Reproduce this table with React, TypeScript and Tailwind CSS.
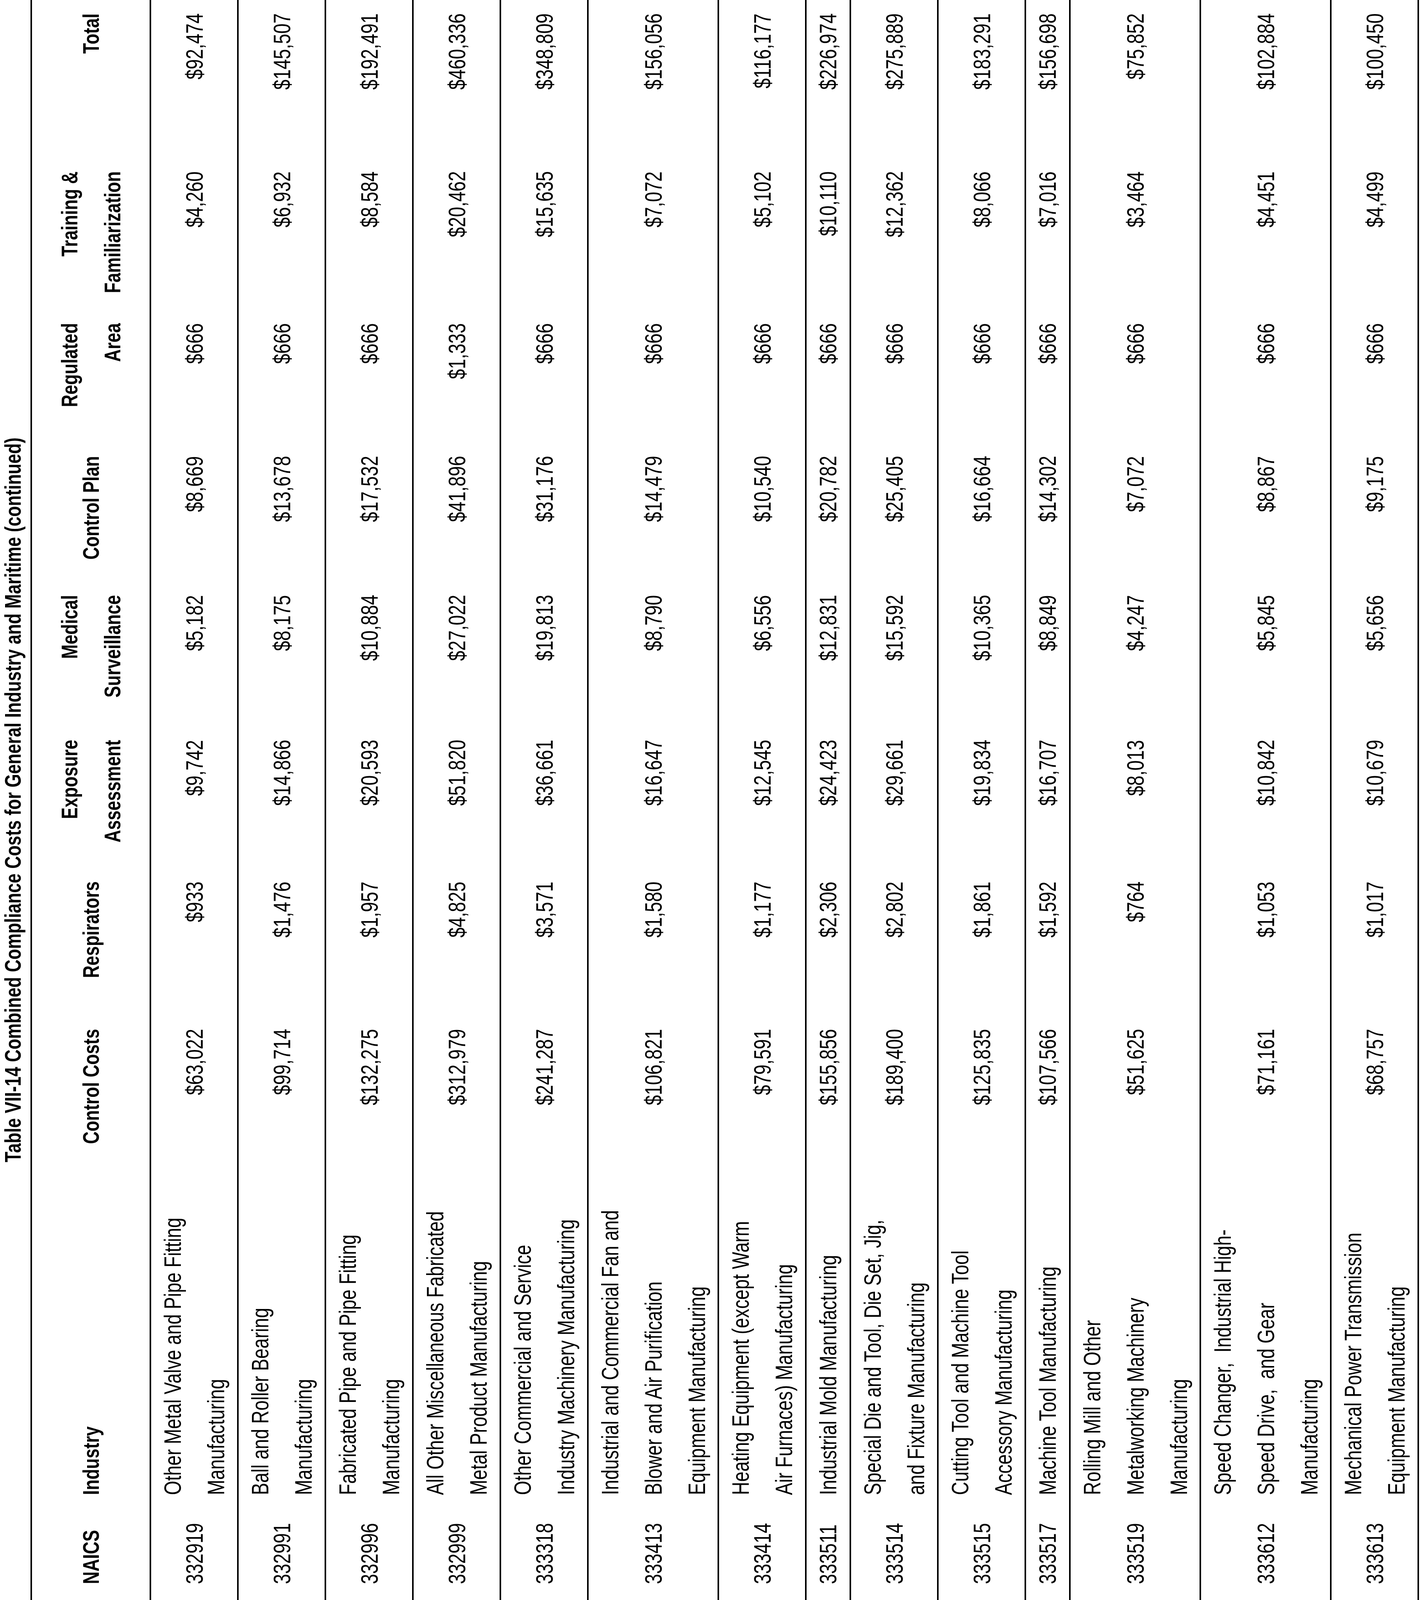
import { useEffect, useState } from "react";

// The page is a landscape table printed sideways: the whole sheet is laid out
// in a vertical writing mode and turned 180deg, so text reads bottom-to-top.
const SHEET_H = 5333;

const cols =
  "grid grid-cols-[350px_970px_583px_492px_472px_483px_463px_443px_506px_571px]";

interface Row {
  naics: string;
  industry: string[];
  values: string[];
}

const rows: Row[] = [
  {
    naics: "332919",
    industry: ["Other Metal Valve and Pipe Fitting", "Manufacturing"],
    values: ["$63,022", "$933", "$9,742", "$5,182", "$8,669", "$666", "$4,260", "$92,474"],
  },
  {
    naics: "332991",
    industry: ["Ball and Roller Bearing", "Manufacturing"],
    values: ["$99,714", "$1,476", "$14,866", "$8,175", "$13,678", "$666", "$6,932", "$145,507"],
  },
  {
    naics: "332996",
    industry: ["Fabricated Pipe and Pipe Fitting", "Manufacturing"],
    values: ["$132,275", "$1,957", "$20,593", "$10,884", "$17,532", "$666", "$8,584", "$192,491"],
  },
  {
    naics: "332999",
    industry: ["All Other Miscellaneous Fabricated", "Metal Product Manufacturing"],
    values: ["$312,979", "$4,825", "$51,820", "$27,022", "$41,896", "$1,333", "$20,462", "$460,336"],
  },
  {
    naics: "333318",
    industry: ["Other Commercial and Service", "Industry Machinery Manufacturing"],
    values: ["$241,287", "$3,571", "$36,661", "$19,813", "$31,176", "$666", "$15,635", "$348,809"],
  },
  {
    naics: "333413",
    industry: [
      "Industrial and Commercial Fan and",
      "Blower and Air Purification",
      "Equipment Manufacturing",
    ],
    values: ["$106,821", "$1,580", "$16,647", "$8,790", "$14,479", "$666", "$7,072", "$156,056"],
  },
  {
    naics: "333414",
    industry: ["Heating Equipment (except Warm", "Air Furnaces) Manufacturing"],
    values: ["$79,591", "$1,177", "$12,545", "$6,556", "$10,540", "$666", "$5,102", "$116,177"],
  },
  {
    naics: "333511",
    industry: ["Industrial Mold Manufacturing"],
    values: ["$155,856", "$2,306", "$24,423", "$12,831", "$20,782", "$666", "$10,110", "$226,974"],
  },
  {
    naics: "333514",
    industry: ["Special Die and Tool, Die Set, Jig,", "and Fixture Manufacturing"],
    values: ["$189,400", "$2,802", "$29,661", "$15,592", "$25,405", "$666", "$12,362", "$275,889"],
  },
  {
    naics: "333515",
    industry: ["Cutting Tool and Machine Tool", "Accessory Manufacturing"],
    values: ["$125,835", "$1,861", "$19,834", "$10,365", "$16,664", "$666", "$8,066", "$183,291"],
  },
  {
    naics: "333517",
    industry: ["Machine Tool Manufacturing"],
    values: ["$107,566", "$1,592", "$16,707", "$8,849", "$14,302", "$666", "$7,016", "$156,698"],
  },
  {
    naics: "333519",
    industry: ["Rolling Mill and Other", "Metalworking Machinery", "Manufacturing"],
    values: ["$51,625", "$764", "$8,013", "$4,247", "$7,072", "$666", "$3,464", "$75,852"],
  },
  {
    naics: "333612",
    industry: ["Speed Changer,  Industrial High-", "Speed Drive,  and Gear", "Manufacturing"],
    values: ["$71,161", "$1,053", "$10,842", "$5,845", "$8,867", "$666", "$4,451", "$102,884"],
  },
  {
    naics: "333613",
    industry: ["Mechanical Power Transmission", "Equipment Manufacturing"],
    values: ["$68,757", "$1,017", "$10,679", "$5,656", "$9,175", "$666", "$4,499", "$100,450"],
  },
];

const headers: string[][] = [
  ["Control Costs"],
  ["Respirators"],
  ["Exposure", "Assessment"],
  ["Medical", "Surveillance"],
  ["Control Plan"],
  ["Regulated", "Area"],
  ["Training &", "Familiarization"],
  ["Total"],
];

// row thickness across the sheet, bottom rule included
const rowSize: Record<number, string> = {
  1: "[block-size:114px]",
  2: "[block-size:224px]",
  3: "[block-size:334px]",
};

function HeaderRow() {
  return (
    <div
      className={`${cols} [block-size:309px] [border-block-width:4px] border-black font-bold text-[58px] leading-[110px]`}
    >
      <div className="flex items-center ps-[53px]">NAICS</div>
      <div className="flex items-center">Industry</div>
      {headers.map((lines, i) => (
        <div
          key={i}
          className={`flex flex-col justify-center items-end ${i === headers.length - 1 ? "pe-[45px]" : ""}`}
        >
          {lines.map((l) => (
            <div key={l} className="whitespace-nowrap">
              {l}
            </div>
          ))}
        </div>
      ))}
    </div>
  );
}

function DataRow({ row }: { row: Row }) {
  return (
    <div
      className={`${cols} ${rowSize[row.industry.length]} [border-block-end-width:4px] border-black text-[61px] leading-[111px]`}
    >
      <div className="flex items-center ps-[53px]">{row.naics}</div>
      <div className="flex flex-col justify-center">
        {row.industry.map((l, i) => (
          <div key={i} className="whitespace-pre">
            {l}
          </div>
        ))}
      </div>
      {row.values.map((v, i) => (
        <div
          key={i}
          className={`flex items-center justify-end ${i === row.values.length - 1 ? "pe-[45px]" : ""}`}
        >
          {v}
        </div>
      ))}
    </div>
  );
}

function useSheetFit() {
  const read = () =>
    typeof window === "undefined" ? 1 : Math.min(1, window.innerHeight / SHEET_H);
  const [fit, setFit] = useState(read);
  useEffect(() => {
    const onResize = () => setFit(read());
    onResize();
    window.addEventListener("resize", onResize);
    return () => window.removeEventListener("resize", onResize);
  }, []);
  return fit;
}

export default function App() {
  // squeeze the sheet into the window if the window is shorter than the page
  const fit = useSheetFit();

  return (
    <div className="w-[3638px] overflow-hidden bg-white" style={{ height: SHEET_H * fit }}>
      <div className="origin-top-left" style={{ transform: `scaleY(${fit})` }}>
        <div className="w-[3638px] h-[5333px] bg-white text-black font-['Liberation_Sans',Arial,sans-serif] [writing-mode:vertical-rl] rotate-180">
          <div className="[block-size:65px] text-center font-bold text-[58px] leading-[65px] whitespace-nowrap">
            Table VII-14 Combined Compliance Costs for General Industry and Maritime (continued)
          </div>
          <div className="[margin-block-start:13px]">
            <HeaderRow />
            {rows.map((r) => (
              <DataRow key={r.naics} row={r} />
            ))}
          </div>
        </div>
      </div>
    </div>
  );
}
